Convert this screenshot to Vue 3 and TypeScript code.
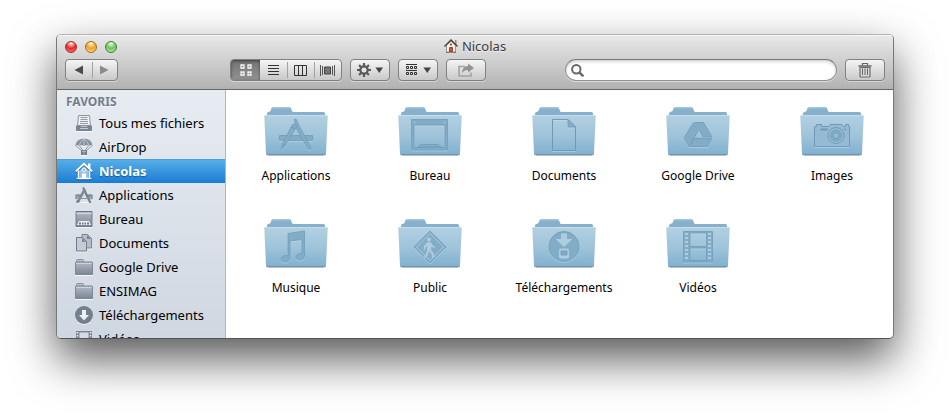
<script setup lang="ts">
import { ref } from 'vue'

interface Place {
  name: string
  icon: string
}

const places: Place[] = [
  { name: 'Tous mes fichiers', icon: 'tray' },
  { name: 'AirDrop', icon: 'airdrop' },
  { name: 'Nicolas', icon: 'home' },
  { name: 'Applications', icon: 'apps' },
  { name: 'Bureau', icon: 'desktop' },
  { name: 'Documents', icon: 'documents' },
  { name: 'Google Drive', icon: 'folder' },
  { name: 'ENSIMAG', icon: 'folder' },
  { name: 'Téléchargements', icon: 'download' },
  { name: 'Vidéos', icon: 'film' },
]

const folders: Place[] = [
  { name: 'Applications', icon: 'apps' },
  { name: 'Bureau', icon: 'desktop' },
  { name: 'Documents', icon: 'document' },
  { name: 'Google Drive', icon: 'drive' },
  { name: 'Images', icon: 'camera' },
  { name: 'Musique', icon: 'music' },
  { name: 'Public', icon: 'public' },
  { name: 'Téléchargements', icon: 'download' },
  { name: 'Vidéos', icon: 'film' },
]

const current = ref('Nicolas')
const view = ref('icons')
const query = ref('')
const filmHoles = [0, 1, 2, 3, 4, 5, 6]
</script>

<template>
  <div class="desktop">
    <main class="window">
      <header class="chrome">
        <div class="titlebar">
          <div class="lights">
            <button class="light red" aria-label="Fermer"></button>
            <button class="light amber" aria-label="Réduire"></button>
            <button class="light green" aria-label="Agrandir"></button>
          </div>
          <h1 class="title">
            <svg width="14" height="16" viewBox="0 0 14 16" aria-hidden="true">
              <path d="M11 2h1.500v5H11z" fill="#a08c62" />
              <path d="M2.500 7.500 7 3l4.500 4.500V14h-9z" fill="#f7f3ea" stroke="#9b968b" />
              <path d="M.5 8.500 7 2l6.500 6.500" fill="none" stroke="#45413d" stroke-width="1.400" />
              <path d="M5.500 9.500h3V14h-3z" fill="#e0501c" stroke="#73311e" stroke-width=".8" />
              <path d="M6 5.500h2v2H6z" fill="#b9463a" />
              <path d="M2 14.500h3M9 14.500h3" stroke="#6e7a55" />
            </svg>
            <span>{{ current }}</span>
          </h1>
        </div>

        <div class="toolbar">
          <div class="group nav">
            <button class="seg" aria-label="Précédent">
              <svg width="10" height="10" viewBox="0 0 10 10"><path d="M9 .5v9L.5 5z" fill="#4b4b4b" /></svg>
            </button>
            <button class="seg" aria-label="Suivant">
              <svg width="10" height="10" viewBox="0 0 10 10"><path d="M1 .5v9L9.500 5z" fill="#8b8b8b" /></svg>
            </button>
          </div>

          <div class="group views">
            <button class="seg wide" :class="{ pressed: view === 'icons' }" aria-label="Icônes" @click="view = 'icons'">
              <svg width="12" height="12" viewBox="0 0 12 12">
                <path d="M1 0h3v3H1zM8 0h3v3H8zM1 7h3v3H1zM8 7h3v3H8z" fill="none" stroke="#505050" transform="translate(0 .5)" />
                <path d="M1 1h3v3H1zM8 1h3v3H8zM1 8h3v3H1zM8 8h3v3H8z" fill="none" stroke="#fff" stroke-width="1.300" />
              </svg>
            </button>
            <button class="seg" :class="{ pressed: view === 'list' }" aria-label="Liste" @click="view = 'list'">
              <svg width="11" height="11" viewBox="0 0 11 11"><path d="M0 .5h11M0 3.500h11M0 6.500h11M0 9.500h11" stroke="#333" /></svg>
            </button>
            <button class="seg" :class="{ pressed: view === 'columns' }" aria-label="Colonnes" @click="view = 'columns'">
              <svg width="13" height="11" viewBox="0 0 13 11"><path d="M.5.5h12v10H.5zM4.500.5v10M8.500.5v10" fill="none" stroke="#333" /></svg>
            </button>
            <button class="seg" :class="{ pressed: view === 'flow' }" aria-label="Cover Flow" @click="view = 'flow'">
              <svg width="15" height="11" viewBox="0 0 15 11">
                <path d="M.5 0v11M2.500 1v9M12.500 1v9M14.500 0v11" stroke="#555" />
                <path d="M4.500 2h6v7h-6z" fill="#777" stroke="#444" />
              </svg>
            </button>
          </div>

          <button class="tool" aria-label="Actions">
            <svg width="26" height="14" viewBox="0 0 26 14">
              <g fill="#5a5a5a">
                <g stroke="#5a5a5a" stroke-width="2.200">
                  <path d="M7 0v14M0 7h14M2.050 2.050l9.900 9.900M11.950 2.050l-9.900 9.900" />
                </g>
                <circle cx="7" cy="7" r="4.800" />
                <path d="M18.500 4.500h7.500L22.250 10z" fill="#444" />
              </g>
              <circle cx="7" cy="7" r="2.500" fill="#e5e5e5" />
            </svg>
          </button>

          <button class="tool" aria-label="Ranger par">
            <svg width="26" height="14" viewBox="0 0 26 14">
              <path d="M1 1.500h11M1 7.500h11" stroke="#333" />
              <path d="M1.500 3.500h2v2h-2zM5.500 3.500h2v2h-2zM9.500 3.500h2v2h-2zM1.500 9.500h2v2h-2zM5.500 9.500h2v2h-2zM9.500 9.500h2v2h-2z" fill="none" stroke="#333" />
              <path d="M18.500 4.500h7.500L22.250 10z" fill="#444" />
            </svg>
          </button>

          <button class="tool" aria-label="Partager">
            <svg width="16" height="14" viewBox="0 0 16 14">
              <path d="M7 3.500H1v9.500h12V9.500" fill="none" stroke="#a3a3a3" stroke-width="1.600" />
              <path d="M10 0.500 16 5l-6 4.500V7C7.500 6.800 5.800 7.600 4 10c.3-4.500 2.800-6.700 6-6.900z" fill="#929292" />
            </svg>
          </button>

          <label class="search">
            <svg width="13" height="13" viewBox="0 0 13 13" aria-hidden="true">
              <circle cx="5.300" cy="5.300" r="4.200" fill="none" stroke="#686868" stroke-width="2" />
              <path d="m8.300 8.300 4 4" stroke="#686868" stroke-width="2.400" />
            </svg>
            <input v-model="query" type="search" aria-label="Rechercher" />
          </label>

          <button class="tool" aria-label="Supprimer">
            <svg width="14" height="15" viewBox="0 0 14 15">
              <path d="M4.500 2.500v-2h5v2" fill="none" stroke="#666" stroke-width="1.200" />
              <path d="M.5 3h13" stroke="#666" stroke-width="1.600" />
              <path d="M2 4.500h10v8.500q0 1-1 1H3q-1 0-1-1z" fill="#d8d8d8" stroke="#6c6c6c" stroke-width="1.200" />
              <path d="M4.500 5.500v6.500M7 5.500v6.500M9.500 5.500v6.500" stroke="#666" />
            </svg>
          </button>
        </div>
      </header>

      <div class="body">
        <nav class="sidebar">
          <h2>FAVORIS</h2>
          <a
            v-for="place in places"
            :key="place.name"
            href="#"
            class="place"
            :class="{ selected: place.name === current }"
            @click.prevent="current = place.name"
          >
            <svg class="place-icon" width="18" height="18" viewBox="0 0 18 18" aria-hidden="true">
              <defs>
                <linearGradient id="steel" x1="0" y1="0" x2="0" y2="1">
                  <stop offset="0" stop-color="#b2bac4" />
                  <stop offset="1" stop-color="#7b8695" />
                </linearGradient>
              </defs>
              <g v-if="place.icon === 'tray'">
                <path d="M3.500 1.500h11l1 10h-13z" fill="#eef0f3" stroke="#8792a0" />
                <path d="M5.500 3.500h7M5.500 5.500h7M5 7.500h8M5 9.500h8" stroke="#939daa" />
                <path d="M1 11.500h4l1 1h6l1-1h4v4.500q0 1-1 1H2q-1 0-1-1z" fill="#788493" />
                <path d="M5 14.500h8" stroke="#c3cad2" />
              </g>
              <g v-else-if="place.icon === 'airdrop'">
                <path d="M.5 8C.5 3.500 4 .8 9 .8S17.500 3.500 17.500 8q-2-1.500-3.500 0-2-1.500-5 0-3-1.500-5 0Q2.500 6.500.5 8z" fill="#8893a1" />
                <path d="M4 8Q5 3 9 1q4 2 5 7M9 1v7" fill="none" stroke="#c5ccd5" stroke-width=".8" />
                <path d="m1 8 6 5M17 8l-6 5M4.500 8 8 12.500M13.500 8 10 12.500" stroke="#8590a0" />
                <path d="M6 12h6v5H6z" fill="#6f7b8b" />
                <path d="M7 13.500h4M9 12v5" stroke="#a9b2bd" />
              </g>
              <g v-else-if="place.icon === 'home'">
                <path d="M13 1.500h2.500V7L13 5z" fill="#fff" />
                <path d="M.8 9.300 9 1.800l8.200 7.500" fill="none" stroke="#fff" stroke-width="1.800" />
                <path d="M3.500 8.500v8h11v-8" fill="none" stroke="#fff" stroke-width="1.500" />
                <path d="M9 4.500 13.500 9v7.500h-9V9z" fill="#fff" opacity=".55" />
                <circle cx="9" cy="8" r="1.900" fill="#3d97dc" stroke="#fff" />
                <circle cx="9" cy="8" r=".8" fill="#fff" />
                <path d="M7 11.500h4v5H7z" fill="#fff" />
                <path d="M1.500 16.500h15" stroke="#fff" />
              </g>
              <g v-else-if="place.icon === 'apps'">
                <path d="M.5 8.500h17v5H.5z" fill="#a2abb7" />
                <path d="M1 13V9h16v4M3 9v2M5 9v1.500M13 9v1.500M15 9v2" fill="none" stroke="#76828f" />
                <path d="m9 4-5.500 12h11z" fill="#dbe1e9" />
                <path d="m8 1.500 7.500 15.500" stroke="#74808f" stroke-width="2.200" />
                <path d="m9.800 3-7 13.500" stroke="#7d8897" stroke-width="2.600" />
                <path d="m1.700 14-.4 3.500L4 15z" fill="#65717f" />
                <path d="M4.500 12.500h9" stroke="#8b96a4" />
              </g>
              <g v-else-if="place.icon === 'desktop'">
                <path d="M1 1.500h16v15H1z" fill="url(#steel)" stroke="#6f7a89" />
                <path d="M1.500 3.500h15" stroke="#d5dae1" />
                <path d="M4 11h10l2 4H2z" fill="#eef1f4" />
                <path d="M4 13.500h2M7 13.500h1.500M9.500 13.500H11M12 13.500h2" stroke="#697687" stroke-width="1.800" />
              </g>
              <g v-else-if="place.icon === 'documents'">
                <path d="M7 .5h5.500l4 4V14H7z" fill="#b6bec9" stroke="#7b8695" />
                <path d="M12 1v4h4z" fill="#7b8695" />
                <path d="M1.500 3.500h6L11.500 7.500v9.500h-10z" fill="#c5ccd6" stroke="#6f7b8b" />
                <path d="M7 4v4h4z" fill="#7b8695" />
              </g>
              <g v-else-if="place.icon === 'folder'">
                <path d="M1.500 4V2.500q0-1 1-1h5q1 0 1 1V4" fill="#b5bdc7" stroke="#8792a0" />
                <path d="M.5 4.500q0-.5.500-.5h16q.5 0 .5.500v12H.5z" fill="url(#steel)" stroke="#7d8897" />
                <path d="M1 5.500h16" stroke="#ccd2da" />
              </g>
              <g v-else-if="place.icon === 'download'">
                <circle cx="9" cy="9" r="9" fill="#737f8f" />
                <path d="M7 4h4v5h3l-5 5.500L4 9h3z" fill="#eef1f4" />
              </g>
              <g v-else>
                <path d="M1 1h16v16H1z" fill="#7b8695" />
                <path d="M4.500 2.500h9v6h-9zM4.500 10.500h9v6h-9z" fill="#d5dbe4" />
                <path d="M2.500 2v15M15.500 2v15" stroke="#edf0f3" stroke-width="1.500" stroke-dasharray="1.500 1.500" />
              </g>
            </svg>
            <span>{{ place.name }}</span>
          </a>
        </nav>

        <section class="files">
          <a v-for="folder in folders" :key="folder.name" href="#" class="file" @click.prevent>
            <svg width="64" height="56" viewBox="0 0 64 56" aria-hidden="true">
              <defs>
                <linearGradient id="back" x1="0" y1="0" x2="0" y2="1">
                  <stop offset="0" stop-color="#a6c8dd" />
                  <stop offset=".25" stop-color="#86b0cb" />
                </linearGradient>
                <linearGradient id="front" x1="0" y1="0" x2="0" y2="1">
                  <stop offset="0" stop-color="#b2d0e2" />
                  <stop offset=".5" stop-color="#a0c4da" />
                  <stop offset="1" stop-color="#80b0cf" />
                </linearGradient>
              </defs>
              <path d="M3 50h58l-1 2H4z" fill="#6d7d88" opacity=".5" />
              <path d="M3 13V9.500q0-1.500 1.500-1.500L6.500 7 7.500 4Q8 3 9.500 3h15.500q1.500 0 2 1l1 3q.3 1 1.500 1h30q1.500 0 1.500 1.500V14H3z" fill="url(#back)" />
              <path d="M.3 12.500q-.2-1.500 1.300-1.500h60.800q1.500 0 1.300 1.500L62 49.500q-.1 1.500-1.500 1.500h-57Q2.100 51 2 49.500z" fill="url(#front)" />
              <path d="M1.500 11.500h61" stroke="#c6ddeb" />
              <path d="M2.500 50.500h59" stroke="#6f98b3" />

              <g v-if="folder.icon === 'apps'" class="mark">
                <path class="solid" d="M15.500 31.500h33v5h-33z" />
                <path class="solid" d="M30.200 15.500 32 15l3.500 7.500L47 43.500l-.5 2-2.500-.5-11.500-20z" />
                <path class="solid" d="m28.500 20.500 2-.5 2 1.500-.5 2.500L21 42l-3.500 3.500.7-5z" />
                <path d="m27.500 23 3.500 2M18.500 40.500l2.500 1.500" />
              </g>
              <g v-else-if="folder.icon === 'desktop'" class="mark">
                <path class="solid" fill-rule="evenodd" d="M13.500 15.500h36v30.500h-36zM16 21v22.500h31V21z" />
                <path class="solid" d="m23 40.500-3 2.500h23l-3-2.500z" />
                <path class="glint" d="M16 18.500h1.500M45.500 18.500H47" />
              </g>
              <g v-else-if="folder.icon === 'document'" class="mark">
                <path d="M20.500 15.500H36l7.500 7.500v23.500h-23z" />
                <path class="solid" d="M36 15.500V23h7.500z" />
              </g>
              <g v-else-if="folder.icon === 'drive'" class="mark">
                <path class="solid" d="m27.500 18.500 4.700 8.500L23 42.500l-5-8.500zM28.800 18.500h8.700L46 33h-9zM28 34.300h18L41.500 42.500H24z" />
              </g>
              <g v-else-if="folder.icon === 'camera'" class="mark">
                <path class="tint" d="M14.500 22.500h2v-2h5v2h7l2-2h11l2 2h2v-2h3v2h1v20h-35z" />
                <path d="M20.500 25.500h7" stroke-width="2" />
                <circle class="tint" cx="36" cy="31.500" r="8" />
                <circle class="solid" cx="36" cy="31.500" r="5.500" />
                <circle class="tint" cx="36" cy="31.500" r="3" />
                <circle cx="45" cy="25.500" r=".7" />
              </g>
              <g v-else-if="folder.icon === 'music'" class="mark">
                <path class="solid" d="M24 17.500 40.500 15v25c0 2.200-2 4-4.500 4s-4-1.300-4-3 2-3.500 4.500-3.500q1 0 1.500.3V23.500L26 25v17c0 2.200-2 4-4.700 4-2.500 0-4.300-1.300-4.300-3s2-3.500 4.500-3.500q1.500 0 2.500.5z" />
              </g>
              <g v-else-if="folder.icon === 'public'" class="mark">
                <path class="solid" d="M32 15 48 31 32 47 16 31z" />
                <path class="glint" d="m32 17.500 13.500 13.500L32 44.500 18.500 31z" />
                <circle cx="31" cy="23.500" r="2" class="light-fill" />
                <path class="light-fill" d="m29.500 26 3.500.2 1.500 3 2.500 1.500-.6 1.300-3-1.300-.4 3.300 2.500 3 1 4.500h-2l-1-3.500-2.500-3-1.500 4.500-2 2.500-1.400-1L28 38l1-4v-4l-1.200 1-.8 3h-1.400l.5-4.500z" />
              </g>
              <g v-else-if="folder.icon === 'download'" class="mark">
                <circle class="solid" cx="32" cy="30.500" r="15" />
                <path class="light-fill" d="M29 17.500h6V23h5.500L32 31 23.500 23H29z" />
                <rect class="light-fill" x="27" y="32.500" width="10" height="10" rx="1.500" />
                <path class="solid" d="M29 35h6v4h-6z" />
              </g>
              <g v-else class="mark">
                <path class="solid" fill-rule="evenodd" d="M17.500 15.500h29V46h-29zM24 17v13.500h16.500V17zM24 32v12.500h16.500V32z" />
                <g v-for="hole in filmHoles" :key="hole" class="light-fill">
                  <rect x="19" :y="17 + hole * 4" width="3" height="2" />
                  <rect x="42" :y="17 + hole * 4" width="3" height="2" />
                </g>
              </g>
            </svg>
            <span>{{ folder.name }}</span>
          </a>
        </section>
      </div>
    </main>
  </div>
</template>

<style>
body {
  margin: 0;
  background: #fff;
}
</style>

<style scoped>
.desktop {
  box-sizing: border-box;
  height: 100vh;
  padding: 34px 56px 78px;
  overflow: hidden;
  font-family: "Lucida Grande", "Noto Sans", "Open Sans", sans-serif;
  font-size: 13px;
  color: #000;
}

.window {
  box-sizing: border-box;
  display: flex;
  flex-direction: column;
  height: 100%;
  border: 1px solid #777;
  border-top-color: #b4b4b4;
  border-bottom-color: #555;
  border-radius: 5px;
  overflow: hidden;
  background: #fff;
  box-shadow: 0 20px 45px rgba(0, 0, 0, 0.66);
}

.chrome {
  flex: none;
  box-sizing: border-box;
  height: 55px;
  border-bottom: 1px solid #686868;
  background: linear-gradient(#e9e9e9, #b2b2b2);
  box-shadow: inset 0 1px #f6f6f6;
}

.titlebar {
  display: grid;
  grid-template-columns: 1fr auto 1fr;
  align-items: center;
  height: 24px;
  padding: 0 8px;
}

.lights {
  display: flex;
  gap: 8px;
}

.light {
  width: 12px;
  height: 12px;
  padding: 0;
  border: 1px solid;
  border-radius: 50%;
}

.red {
  border-color: #9b2f2c;
  background: radial-gradient(circle at 50% 15%, #fff 0, #f6a09c 20%, #e8262b 50%, #ff8580 100%);
}

.amber {
  border-color: #a06a22;
  background: radial-gradient(circle at 50% 15%, #fff 0, #fbd27c 20%, #f0a02a 50%, #ffec8c 100%);
}

.green {
  border-color: #3f7e36;
  background: radial-gradient(circle at 50% 15%, #fff 0, #b5e3a5 20%, #6cc45c 50%, #c4f6ae 100%);
}

.title {
  display: flex;
  align-items: center;
  gap: 4px;
  margin: 0;
  padding-bottom: 2px;
  font-size: 13px;
  font-weight: 400;
  line-height: 20px;
  color: #3c3c3c;
  text-shadow: 0 1px rgba(255, 255, 255, 0.6);
}

.toolbar {
  display: flex;
  gap: 8px;
  padding: 0 8px;
}

.group,
.tool {
  box-sizing: border-box;
  display: flex;
  height: 22px;
  border: 1px solid #808080;
  border-radius: 4px;
  background: linear-gradient(#f5f5f5, #c9c9c9);
  box-shadow: 0 1px rgba(255, 255, 255, 0.4);
}

.tool {
  flex: none;
  align-items: center;
  justify-content: center;
  width: 40px;
  padding: 0;
}

.group {
  flex: none;
  overflow: hidden;
}

.nav {
  width: 53px;
}

.views {
  width: 112px;
  margin-left: 104px;
}

.seg {
  position: relative;
  display: flex;
  flex: 1;
  align-items: center;
  justify-content: center;
  padding: 0;
  border: 0;
  background: none;
}

.seg.wide {
  flex: none;
  width: 29px;
}

.seg + .seg::before {
  content: "";
  position: absolute;
  top: 2px;
  bottom: 2px;
  left: 0;
  width: 1px;
  background: #a3a3a3;
}

.seg.pressed {
  background: linear-gradient(#747474, #929292);
  box-shadow: inset 0 1px 3px rgba(0, 0, 0, 0.5);
}

.pressed + .seg::before {
  display: none;
}

.search {
  box-sizing: border-box;
  display: flex;
  align-items: center;
  gap: 4px;
  width: 272px;
  height: 22px;
  margin-left: auto;
  padding: 0 8px 0 5px;
  border: 1px solid #909090;
  border-top-color: #777;
  border-radius: 11px;
  background: #fff;
  box-shadow: inset 0 2px 3px rgba(0, 0, 0, 0.16), 0 1px rgba(255, 255, 255, 0.5);
}

.search svg {
  flex: none;
}

.search input {
  flex: 1;
  min-width: 0;
  padding: 0;
  border: 0;
  outline: 0;
  background: none;
  font: inherit;
}

.body {
  display: flex;
  flex: 1;
  min-height: 0;
}

.sidebar {
  flex: none;
  width: 168px;
  border-right: 1px solid #b3b7bc;
  overflow: hidden;
  background: linear-gradient(#e7ecf1, #cfd7e1);
}

.sidebar h2 {
  margin: 0;
  padding: 3px 9px 0;
  font-size: 12px;
  line-height: 18px;
  color: #717e8c;
  text-shadow: 0 1px rgba(255, 255, 255, 0.6);
}

.place {
  display: flex;
  align-items: center;
  gap: 6px;
  height: 24px;
  padding-left: 18px;
  color: inherit;
  line-height: 24px;
  text-decoration: none;
  white-space: nowrap;
}

.place-icon {
  flex: none;
  filter: drop-shadow(0 1px 0 rgba(255, 255, 255, 0.7));
}

.selected {
  background: linear-gradient(#58b0e8, #1b7cd4);
  box-shadow: inset 0 1px #4aa0dc;
  color: #fff;
  font-weight: 700;
  text-shadow: 0 1px 1px rgba(0, 40, 90, 0.5);
}

.selected .place-icon {
  filter: drop-shadow(0 1px 0 rgba(0, 50, 110, 0.5));
}

.files {
  flex: 1;
  display: grid;
  grid-template-columns: repeat(auto-fill, 120px);
  align-content: start;
  gap: 30px 14px;
  min-width: 0;
  padding: 14px 0 0 10px;
  overflow: hidden;
}

.file {
  display: flex;
  flex-direction: column;
  align-items: center;
  gap: 6px;
  color: inherit;
  font-size: 12px;
  line-height: 20px;
  text-decoration: none;
  white-space: nowrap;
}

.mark {
  fill: none;
  stroke: #7099b5;
  stroke-width: 1;
  filter: drop-shadow(0 1px 0 rgba(205, 228, 241, 0.45));
}

.mark .solid {
  fill: #83adc7;
  stroke: #6f9ab7;
  stroke-width: 0.8;
}

.mark .tint {
  fill: #94bbd3;
  stroke: #6f9ab7;
}

.mark .glint {
  stroke: #a9cbde;
}

.mark .light-fill {
  fill: #aecde0;
  stroke: none;
}
</style>
